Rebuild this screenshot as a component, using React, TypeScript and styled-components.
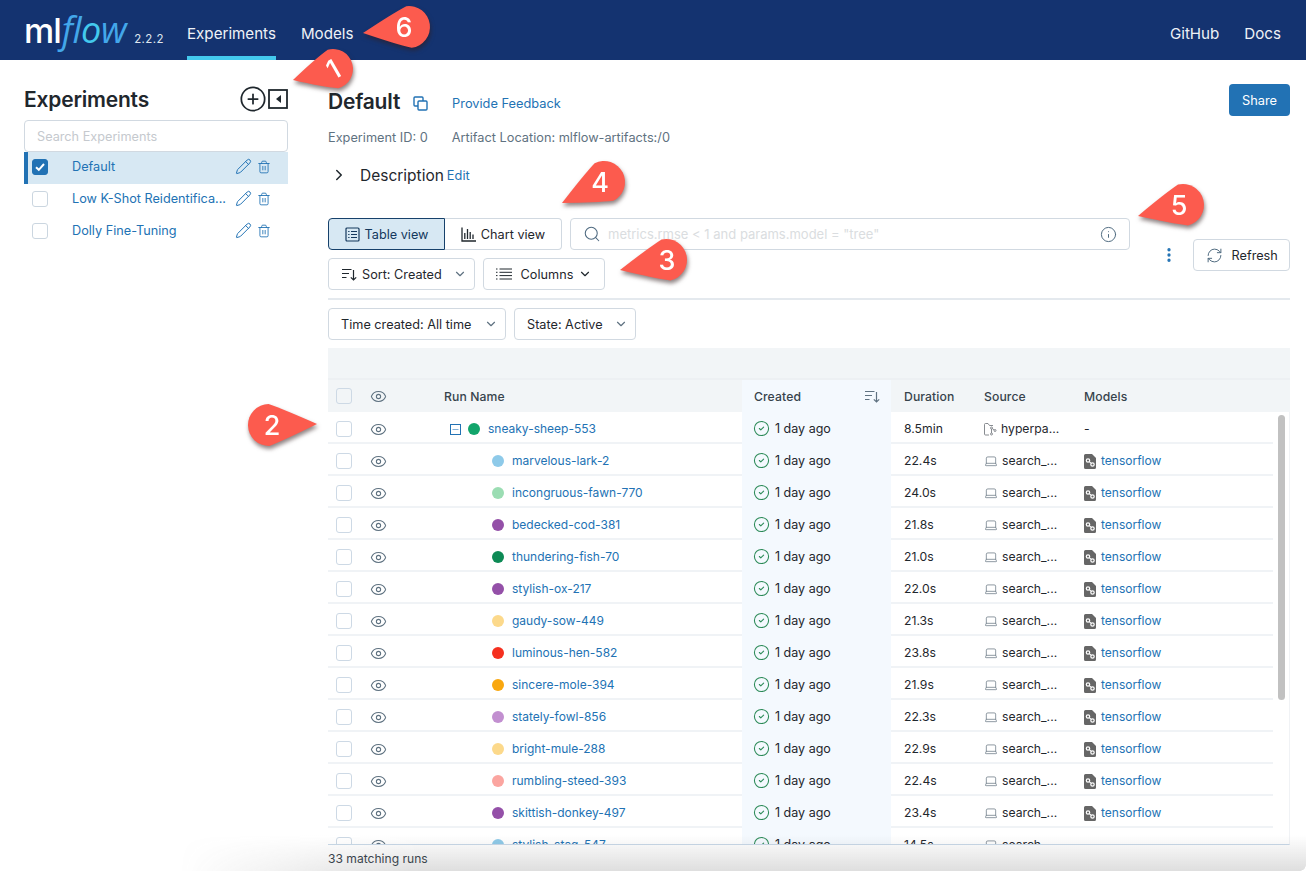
import React from "react";
import styled, { createGlobalStyle } from "styled-components";
import { Eye, CircleCheck, Search, Info, Pencil, Trash2, ChevronDown, ChevronRight, RefreshCw, Laptop, CirclePlus, EllipsisVertical, Minus } from "lucide-react";

const Global = createGlobalStyle`
  html, body { margin: 0; padding: 0; background: #fff; }
  body { font-family: Inter, "Liberation Sans", sans-serif; font-size: 12.8px; color: #1f272d; overflow: hidden; }
  #root { width: 1306px; height: 871px; overflow: hidden; }
  * { box-sizing: border-box; }
`;

const BLUE = "#2272b4";
const LINE = "#d1d9e1";

const Page = styled.div`
  position: relative;
  width: 1306px;
  height: 871px;
  display: flex;
  flex-direction: column;
  overflow: hidden;
`;

const Header = styled.header`
  height: 60px;
  flex: none;
  background: #143370;
  display: flex;
  align-items: stretch;
  padding: 0 0 0 24px;
`;
const Logo = styled.div`
  display: flex;
  align-items: baseline;
  width: 163px;
  padding-top: 8px;
  line-height: 44px;
`;
const LogoMl = styled.span`
  color: #fff;
  font-size: 34px;
  font-weight: 500;
  letter-spacing: -1px;
`;
const LogoFlow = styled.span`
  color: #43a7ea;
  font-size: 36px;
  font-style: italic;
  font-weight: 400;
  font-family: "Open Sans", sans-serif;
  letter-spacing: -0.5px;
  margin-left: 1px;
`;
const LogoO = styled.span`
  color: #43c9ed;
`;
const LogoVersion = styled.span`
  color: #dfe6ee;
  font-size: 11.5px;
  margin-left: 8px;
  letter-spacing: 0.4px;
`;
const NavLink = styled.a<{ $active?: boolean }>`
  display: flex;
  align-items: center;
  height: 60px;
  padding-top: 10px;
  color: #eef2f7;
  font-size: 15.15px;
  margin-right: 25px;
  border-bottom: 4px solid ${(p) => (p.$active ? "#43c9ed" : "transparent")};
`;
const Spacer = styled.div`
  flex: 1;
`;

const Body = styled.div`
  flex: 1;
  display: flex;
  min-height: 0;
  padding: 0 16px 0 24px;
`;
const Sidebar = styled.aside`
  width: 264px;
  flex: none;
  margin-right: 40px;
  padding-top: 24px;
`;
const SideHead = styled.div`
  height: 36px;
  padding-bottom: 6px;
  display: flex;
  align-items: center;
  justify-content: space-between;
`;
const SideTitle = styled.h2`
  margin: 0;
  font-size: 21px;
  font-weight: 600;
  letter-spacing: -0.2px;
  color: #1f272d;
`;
const SideIcons = styled.div`
  display: flex;
  align-items: center;
  gap: 1px;
  color: #1f272d;
`;
const SideSearch = styled.div`
  height: 32px;
  border: 1px solid ${LINE};
  border-radius: 4px;
  display: flex;
  align-items: center;
  padding-left: 12px;
  color: #c5c9ce;
  font-size: 12.7px;
`;
const SideRow = styled.div<{ $active?: boolean }>`
  height: 32px;
  padding-bottom: 3px;
  display: flex;
  align-items: center;
  background: ${(p) => (p.$active ? "#d7e8f3" : "transparent")};
  border-left: 4px solid ${(p) => (p.$active ? BLUE : "transparent")};
  color: ${BLUE};
  font-size: 12.7px;
`;
const SideCheck = styled.span<{ $on?: boolean }>`
  width: 16px;
  height: 16px;
  margin-left: 4px;
  margin-right: 24px;
  flex: none;
  border-radius: 3px;
  background: ${(p) => (p.$on ? BLUE : "#fff")};
  border: 1px solid ${(p) => (p.$on ? BLUE : "#cbd6e0")};
  display: flex;
  align-items: center;
  justify-content: center;
`;
const SideName = styled.span`
  width: 158px;
  white-space: nowrap;
  flex: none;
`;
const SideActions = styled.span`
  display: flex;
  align-items: center;
  gap: 5px;
  margin-left: 5px;
  color: ${BLUE};
`;

const Main = styled.main`
  flex: 1;
  min-width: 0;
  display: flex;
  flex-direction: column;
  padding-top: 24px;
`;
const TitleRow = styled.div`
  height: 32px;
  display: flex;
  align-items: center;
`;
const Title = styled.h1`
  margin: 2px 0 0;
  font-size: 21px;
  font-weight: 600;
  letter-spacing: -0.2px;
`;
const CopyWrap = styled.span`
  display: flex;
  margin: 6px 24px 0 13px;
`;
const Link = styled.a`
  color: ${BLUE};
  font-size: 12.8px;
`;
const FeedbackLink = styled(Link)`
  margin-top: 6px;
`;
const ShareBtn = styled.button`
  margin-left: auto;
  width: 61px;
  height: 32px;
  border: 0;
  border-radius: 4px;
  background: ${BLUE};
  color: #fff;
  font: inherit;
  font-size: 12.8px;
`;
const Meta = styled.div`
  display: flex;
  gap: 24px;
  color: #5f7281;
  font-size: 12.75px;
  margin-top: 11px;
  height: 20px;
  align-items: center;
`;
const DescRow = styled.div`
  display: flex;
  align-items: center;
  height: 24px;
  margin-top: 16px;
  padding-left: 2px;
`;
const DescLabel = styled.span`
  font-size: 15.5px;
  margin-left: 12px;
  margin-right: 3px;
`;

const Controls = styled.div`
  display: flex;
  margin-top: 31px;
  height: 90px;
`;
const ControlsLeft = styled.div`
  width: 802px;
  flex: none;
`;
const ControlLine = styled.div`
  display: flex;
  gap: 8px;
  margin-bottom: 8px;
`;
const Segments = styled.div`
  display: flex;
  width: 234px;
`;
const Segment = styled.div<{ $active?: boolean }>`
  height: 32px;
  flex: ${(p) => (p.$active ? "0 0 117px" : "1")};
  display: flex;
  align-items: center;
  justify-content: center;
  gap: 5px;
  font-size: 12.7px;
  background: ${(p) => (p.$active ? "#d7e8f3" : "#fff")};
  border: 1px solid ${(p) => (p.$active ? "#16416b" : LINE)};
  border-radius: ${(p) => (p.$active ? "4px 0 0 4px" : "0 4px 4px 0")};
  border-left-width: ${(p) => (p.$active ? "1px" : "0")};
  color: ${(p) => (p.$active ? "#14385d" : "#1f272d")};
`;
const SearchBox = styled.div`
  width: 560px;
  height: 32px;
  border: 1px solid ${LINE};
  border-radius: 4px;
  display: flex;
  align-items: center;
  padding: 0 12px;
  gap: 7px;
  color: #dadde0;
  font-size: 13px;
`;
const Placeholder = styled.span`
  flex: 1;
`;
const Btn = styled.div<{ $w: number; $tight?: boolean }>`
  width: ${(p) => p.$w}px;
  height: 32px;
  border: 1px solid ${LINE};
  border-radius: 4px;
  display: flex;
  align-items: center;
  padding: 0 ${(p) => (p.$tight ? "7px" : "12px")} 0 12px;
  font-size: 12.7px;
  color: #1f272d;
  background: #fff;
  justify-content: space-between;
`;
const BtnLeft = styled.span`
  display: flex;
  align-items: center;
  gap: 5px;
`;
const ControlsRight = styled.div`
  flex: 1;
  display: flex;
  align-items: flex-start;
  justify-content: flex-end;
  padding-top: 21px;
  gap: 7px;
`;
const Kebab = styled.span`
  display: flex;
  width: 33px;
  height: 32px;
  margin-right: 1px;
  align-items: center;
  justify-content: center;
  color: ${BLUE};
`;
const Rule = styled.div`
  height: 2px;
  background: #e4e9ee;
  margin-top: -10px;
  flex: none;
`;
const Filters = styled.div`
  display: flex;
  gap: 8px;
  margin-top: 8px;
  flex: none;
`;

const Table = styled.div`
  margin-top: 8px;
  flex: 1;
  min-height: 0;
  display: flex;
  flex-direction: column;
`;
const Band = styled.div`
  height: 32px;
  flex: none;
  background: #f2f5f7;
  border-bottom: 2px solid #edf0f3;
`;
const Grid = styled.div`
  display: grid;
  grid-template-columns: 33px 58px 323px 149px 80px 100px 1fr;
  height: 32px;
  margin-right: 16px;
  align-items: center;
  font-size: 12.2px;
`;
const HeadBar = styled.div`
  background: #f2f5f7;
  flex: none;
`;
const HeadRow = styled(Grid)`
  font-weight: 500;
  color: #37434c;
  letter-spacing: 0.1px;
`;
const Scroller = styled.div`
  position: relative;
  height: 433px;
  flex: none;
  overflow: hidden;
  border-bottom: 1px solid #c9d9e8;
  border-right: 1px solid #f0f2f5;
`;
const BodyRow = styled(Grid)`
  padding-top: 2px;
  border-bottom: 2px solid #f0f3f6;
`;
const CheckCell = styled.div`
  padding-left: 8px;
  display: flex;
`;
const Check = styled.span`
  width: 16px;
  height: 16px;
  border: 1px solid #cdd9e5;
  border-radius: 3px;
  background: #fff;
`;
const HeadCheck = styled(Check)`
  background: #f2f5f7;
`;
const EyeCell = styled.div`
  padding-left: 9px;
  color: #5f7281;
  display: flex;
`;
const RowText = styled.span`
  margin-bottom: 2px;
`;
const NameCell = styled.div<{ $child?: boolean }>`
  padding-left: ${(p) => (p.$child ? "73px" : "31px")};
  display: flex;
  align-items: center;
  gap: 8px;
  color: ${BLUE};
  font-size: 12px;
`;
const HeadName = styled.div`
  padding-left: 25px;
`;
const Expander = styled.span`
  width: 11px;
  height: 11px;
  border: 1px solid ${BLUE};
  display: flex;
  align-items: center;
  justify-content: center;
  color: ${BLUE};
  margin-right: -1px;
`;
const Dot = styled.span<{ $c: string }>`
  width: 12px;
  height: 12px;
  border-radius: 50%;
  background: ${(p) => p.$c};
  flex: none;
`;
const CreatedCell = styled.div`
  margin-top: -2px;
  height: 32px;
  background: #f4f9fe;
  padding-left: 11px;
  display: flex;
  align-items: center;
  gap: 5px;
  color: #1f272d;
  font-size: 12.5px;
  justify-content: flex-start;
  svg { color: #2b8a57; }
`;
const HeadCreated = styled(CreatedCell)`
  margin-top: 0;
  justify-content: space-between;
  padding-left: 12px;
  padding-right: 11px;
  color: #37434c;
  font-size: 12.2px;
  svg { color: #5f7281; }
`;
const Cell = styled.div`
  padding-left: 13px;
  display: flex;
  align-items: center;
  gap: 4px;
  white-space: nowrap;
  svg { color: #6b7a86; }
`;
const ModelLink = styled(RowText)`
  color: ${BLUE};
  margin-left: 1px;
  font-size: 12px;
`;
const ScrollThumb = styled.div`
  position: absolute;
  right: 4px;
  top: 3px;
  width: 7px;
  height: 285px;
  background: #c1c1c1;
  border-radius: 4px;
`;
const Footer = styled.div`
  height: 26px;
  display: flex;
  align-items: center;
  font-size: 12.1px;
  color: #37434c;
`;

const BottomShade = styled.div`
  position: absolute;
  left: 0;
  right: 0;
  bottom: 0;
  height: 36px;
  pointer-events: none;
  background: linear-gradient(to bottom, rgba(90, 90, 90, 0), rgba(90, 90, 90, 0.2));
  -webkit-mask-image: linear-gradient(to right, transparent 180px, #000 420px);
  mask-image: linear-gradient(to right, transparent 180px, #000 420px);
`;
const CornerCut = styled.div`
  position: absolute;
  right: 0;
  bottom: 0;
  width: 6px;
  height: 6px;
  background: radial-gradient(circle at 0 0, transparent 5.5px, #fff 6px);
`;

const BubbleWrap = styled.div`
  position: absolute;
  width: 0;
  height: 0;
  pointer-events: none;
  filter: drop-shadow(1px 3px 2px rgba(50, 30, 30, 0.55));
`;
const BubbleSvg = styled.svg`
  position: absolute;
  left: -80px;
  top: -80px;
  overflow: visible;
`;
const BubbleNum = styled.span<{ $tilt?: number; $dx?: number }>`
  position: absolute;
  left: ${(p) => -20 + (p.$dx ?? 0)}px;
  top: -20px;
  width: 40px;
  height: 40px;
  display: flex;
  align-items: center;
  justify-content: center;
  color: #fff;
  font-size: 27px;
  font-weight: 500;
  transform: rotate(${(p) => p.$tilt ?? 0}deg);
`;

function Bubble({ n, cx, cy, tipX, tipY, r = 21, tilt, dx: nudge }: { n: number; cx: number; cy: number; tipX: number; tipY: number; r?: number; tilt?: number; dx?: number }) {
  const dx = tipX - cx;
  const dy = tipY - cy;
  const d = Math.hypot(dx, dy);
  const ang = (Math.atan2(dy, dx) * 180) / Math.PI;
  return (
    <BubbleWrap style={{ left: cx, top: cy }}>
      <BubbleSvg width={160} height={160} viewBox="-80 -80 160 160">
        <path
          transform={`rotate(${ang})`}
          d={`M${d} 0 Q${r * 0.75} ${r * 0.72} 0 ${r} A${r} ${r} 0 1 1 0 ${-r} Q${r * 0.75} ${-r * 0.72} ${d} 0Z`}
          fill="#fc5b4e"
        />
      </BubbleSvg>
      <BubbleNum $tilt={tilt} $dx={nudge}>{n}</BubbleNum>
    </BubbleWrap>
  );
}

const SortIcon = ({ size = 16 }: { size?: number }) => (
  <svg width={size} height={size} viewBox="0 0 16 16" fill="none" stroke="currentColor" strokeWidth="1.2">
    <path d="M1 3.5h9.5M1 7.5h7M1 11.5h4.5" />
    <path d="M12.5 4v10M9.8 11.3l2.7 2.7 2.7-2.7" />
  </svg>
);
const TableIcon = () => (
  <svg width="15" height="15" viewBox="0 0 15 15" fill="none" stroke="currentColor" strokeWidth="1.2">
    <rect x="1" y="1" width="13" height="13" rx="1" />
    <path d="M3.2 4.5h1.3M6 4.5h6M3.2 7.5h1.3M6 7.5h6M3.2 10.500h1.3M6 10.500h6" />
  </svg>
);
const ChartIcon = () => (
  <svg width="15" height="15" viewBox="0 0 15 15" fill="none" stroke="currentColor" strokeWidth="1.3">
    <path d="M1 0.5V14H15" />
    <path d="M3.8 6v6M6.5 2v10M9.2 5v7M12 7.5V12" />
  </svg>
);
const ColumnsIcon = () => (
  <svg width="16" height="12" viewBox="0 0 16 12" fill="none" stroke="currentColor" strokeWidth="1">
    <path d="M0 1h1.5M3.5 1H16M0 4.3h1.5M3.5 4.3H16M0 7.6h1.5M3.5 7.6H16M0 11h1.5M3.5 11H16" />
  </svg>
);
const CopyIcon = () => (
  <svg width="15" height="15" viewBox="0 0 15 15" fill="none" stroke={BLUE} strokeWidth="1.4">
    <rect x="1" y="1" width="9" height="9" rx="1" />
    <rect x="5" y="5" width="9" height="9" rx="1" fill="#fff" />
  </svg>
);
const CollapseIcon = () => (
  <svg width="20" height="20" viewBox="0 0 20 20">
    <rect x="1" y="1" width="18" height="18" fill="none" stroke="#1f272d" strokeWidth="1.8" />
    <path d="M13 6v8l-5-4z" fill="#1f272d" />
  </svg>
);
const ModelIcon = () => (
  <svg width="12" height="15" viewBox="0 0 12 15">
    <path d="M1.5 0H8l4 4v9.5a1.5 1.5 0 0 1-1.5 1.5h-9A1.5 1.5 0 0 1 0 13.500v-12A1.500 1.500 0 0 1 1.500 0Z" fill="#666" />
    <circle cx="4" cy="6.500" r="1.700" fill="none" stroke="#fff" strokeWidth="1.200" />
    <circle cx="8.500" cy="10.500" r="1.700" fill="none" stroke="#fff" strokeWidth="1.200" />
    <path d="M5.300 7.700l2 1.700" stroke="#fff" strokeWidth="1.100" />
  </svg>
);
const RepoIcon = () => (
  <svg width="13" height="13" viewBox="0 0 13 13" fill="none" stroke="#7a7f85" strokeWidth="0.900">
    <path d="M5 12H1.500a1 1 0 0 1-1-1V1.500a1 1 0 0 1 1-1H4l1.500 2H9" />
    <circle cx="7.500" cy="5" r="1" />
    <circle cx="11" cy="7.500" r="1" />
    <circle cx="7.500" cy="11" r="1" />
    <path d="M7.500 6v4M8.300 5.600l1.900 1.300" />
  </svg>
);

const runs: [string, string, string, boolean][] = [
  ["marvelous-lark-2", "#8ecae9", "22.4s", true],
  ["incongruous-fawn-770", "#9bddb3", "24.0s", true],
  ["bedecked-cod-381", "#9450a8", "21.8s", true],
  ["thundering-fish-70", "#0d8a55", "21.0s", true],
  ["stylish-ox-217", "#9450a8", "22.0s", true],
  ["gaudy-sow-449", "#fcd98b", "21.3s", true],
  ["luminous-hen-582", "#f5301f", "23.8s", true],
  ["sincere-mole-394", "#f9a70f", "21.9s", true],
  ["stately-fowl-856", "#c28fd0", "22.3s", true],
  ["bright-mule-288", "#fcd98b", "22.9s", true],
  ["rumbling-steed-393", "#fba5a0", "22.4s", true],
  ["skittish-donkey-497", "#9450a8", "23.4s", true],
  ["stylish-stag-547", "#8ecae9", "14.5s", false],
];

function ChildRow({ name, color, dur, model }: { name: string; color: string; dur: string; model: boolean }) {
  return (
    <BodyRow>
      <CheckCell><Check /></CheckCell>
      <EyeCell><Eye size={17} strokeWidth={1.5} /></EyeCell>
      <NameCell $child><Dot $c={color} /><RowText>{name}</RowText></NameCell>
      <CreatedCell><CircleCheck size={17} strokeWidth={1.5} />1 day ago</CreatedCell>
      <Cell><RowText>{dur}</RowText></Cell>
      <Cell><Laptop size={14} strokeWidth={1.3} /><RowText>search_...</RowText></Cell>
      <Cell>{model && <ModelIcon />}{model && <ModelLink>tensorflow</ModelLink>}</Cell>
    </BodyRow>
  );
}

export default function App() {
  return (
    <Page>
      <Global />
      <Header>
        <Logo>
          <LogoMl>ml</LogoMl>
          <LogoFlow>fl<LogoO>o</LogoO>w</LogoFlow>
          <LogoVersion>2.2.2</LogoVersion>
        </Logo>
        <NavLink $active>Experiments</NavLink>
        <NavLink>Models</NavLink>
        <Spacer />
        <NavLink>GitHub</NavLink>
        <NavLink>Docs</NavLink>
      </Header>
      <Body>
        <Sidebar>
          <SideHead>
            <SideTitle>Experiments</SideTitle>
            <SideIcons>
              <CirclePlus size={28} strokeWidth={1.5} />
              <CollapseIcon />
            </SideIcons>
          </SideHead>
          <SideSearch>Search Experiments</SideSearch>
          <SideRow $active>
            <SideCheck $on>
              <svg width="10" height="10" viewBox="0 0 10 10" fill="none" stroke="#fff" strokeWidth="2"><path d="M1 5.200l2.800 2.600L9 2" /></svg>
            </SideCheck>
            <SideName>Default</SideName>
            <SideActions><Pencil size={17} strokeWidth={1.4} /><Trash2 size={14} strokeWidth={1.5} /></SideActions>
          </SideRow>
          <SideRow>
            <SideCheck />
            <SideName>Low K-Shot Reidentifica...</SideName>
            <SideActions><Pencil size={17} strokeWidth={1.4} /><Trash2 size={14} strokeWidth={1.5} /></SideActions>
          </SideRow>
          <SideRow>
            <SideCheck />
            <SideName>Dolly Fine-Tuning</SideName>
            <SideActions><Pencil size={17} strokeWidth={1.4} /><Trash2 size={14} strokeWidth={1.5} /></SideActions>
          </SideRow>
        </Sidebar>
        <Main>
          <TitleRow>
            <Title>Default</Title>
            <CopyWrap><CopyIcon /></CopyWrap>
            <FeedbackLink>Provide Feedback</FeedbackLink>
            <ShareBtn>Share</ShareBtn>
          </TitleRow>
          <Meta>
            <span>Experiment ID: 0</span>
            <span>Artifact Location: mlflow-artifacts:/0</span>
          </Meta>
          <DescRow>
            <ChevronRight size={18} strokeWidth={2} />
            <DescLabel>Description</DescLabel>
            <Link>Edit</Link>
          </DescRow>
          <Controls>
            <ControlsLeft>
              <ControlLine>
                <Segments>
                  <Segment $active><TableIcon />Table view</Segment>
                  <Segment><ChartIcon />Chart view</Segment>
                </Segments>
                <SearchBox>
                  <Search size={18} strokeWidth={1.4} color="#4f6a80" />
                  <Placeholder>metrics.rmse &lt; 1 and params.model = "tree"</Placeholder>
                  <Info size={17} strokeWidth={1.4} color="#4f6a80" />
                </SearchBox>
              </ControlLine>
              <ControlLine>
                <Btn $w={147} $tight><BtnLeft><SortIcon />Sort: Created</BtnLeft><ChevronDown size={14} color="#5f7281" /></Btn>
                <Btn $w={122}><BtnLeft><ColumnsIcon />&nbsp;Columns</BtnLeft><ChevronDown size={14} color="#1f272d" /></Btn>
              </ControlLine>
            </ControlsLeft>
            <ControlsRight>
              <Kebab><EllipsisVertical size={18} strokeWidth={2.4} /></Kebab>
              <Btn $w={97}><BtnLeft><RefreshCw size={17} strokeWidth={1.4} color="#4f6a80" />&nbsp;Refresh</BtnLeft></Btn>
            </ControlsRight>
          </Controls>
          <Rule />
          <Filters>
            <Btn $w={178} $tight>Time created: All time<ChevronDown size={14} color="#5f7281" /></Btn>
            <Btn $w={122} $tight>State: Active<ChevronDown size={14} color="#5f7281" /></Btn>
          </Filters>
          <Table>
            <Band />
            <HeadBar>
              <HeadRow>
                <CheckCell><HeadCheck /></CheckCell>
                <EyeCell><Eye size={17} strokeWidth={1.5} /></EyeCell>
                <HeadName>Run Name</HeadName>
                <HeadCreated>Created<SortIcon /></HeadCreated>
                <Cell>Duration</Cell>
                <Cell>Source</Cell>
                <Cell>Models</Cell>
              </HeadRow>
            </HeadBar>
            <Scroller>
              <BodyRow>
                <CheckCell><Check /></CheckCell>
                <EyeCell><Eye size={17} strokeWidth={1.5} /></EyeCell>
                <NameCell>
                  <Expander><Minus size={9} strokeWidth={1.5} /></Expander>
                  <Dot $c="#12a56b" />
                  <RowText>sneaky-sheep-553</RowText>
                </NameCell>
                <CreatedCell><CircleCheck size={17} strokeWidth={1.5} />1 day ago</CreatedCell>
                <Cell><RowText>8.5min</RowText></Cell>
                <Cell><RepoIcon /><RowText>hyperpa...</RowText></Cell>
                <Cell><RowText>-</RowText></Cell>
              </BodyRow>
              {runs.map(([n, c, d, m]) => (
                <ChildRow key={n} name={n} color={c} dur={d} model={m} />
              ))}
              <ScrollThumb />
            </Scroller>
            <Footer>33 matching runs</Footer>
          </Table>
        </Main>
      </Body>
      <BottomShade />
      <CornerCut />
      <Bubble n={6} cx={409} cy={27} tipX={363} tipY={33} dx={-5} />
      <Bubble n={1} cx={333} cy={69} tipX={293} tipY={80} r={20} tilt={-30} />
      <Bubble n={4} cx={604} cy={182} tipX={562} tipY={203} dx={-4} />
      <Bubble n={3} cx={666} cy={260} tipX={620} tipY={270} dx={1} />
      <Bubble n={5} cx={1183} cy={205} tipX={1138} tipY={216} dx={-4} />
      <Bubble n={2} cx={269} cy={425} tipX={317} tipY={424} dx={3} />
    </Page>
  );
}
